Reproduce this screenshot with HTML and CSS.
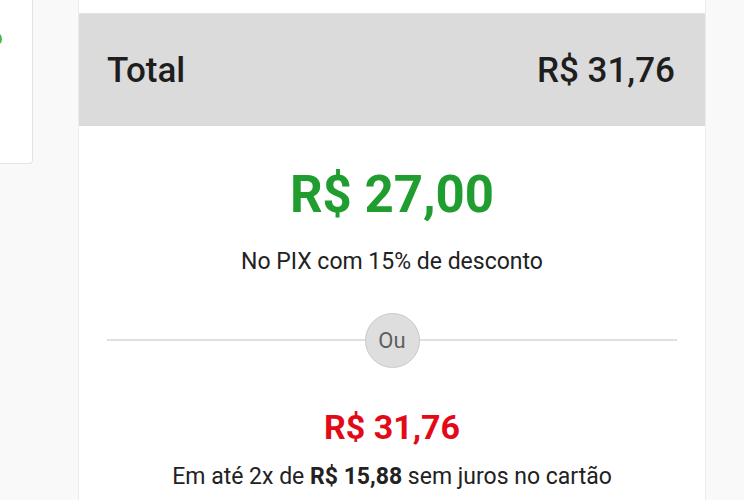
FILE: index.html
```html
<!DOCTYPE html>
<html lang="pt-BR">

<head>
    <meta charset="UTF-8">
    <meta name="viewport" content="width=device-width, initial-scale=1.0">
    <title>Resumo do pedido</title>
    <link rel="stylesheet" href="styles.css">
</head>

<body>
    <div class="page">
        <aside class="side-card">
            <span class="status-dot"></span>
        </aside>

        <section class="summary">
            <div class="summary-total">
                <span>Total</span>
                <span>R$ 31,76</span>
            </div>

            <div class="summary-body">
                <p class="price-pix">R$ 27,00</p>
                <p class="price-note">No PIX com 15% de desconto</p>

                <div class="divider">
                    <span class="divider-label">Ou</span>
                </div>

                <p class="price-card">R$ 31,76</p>
                <p class="price-note">Em até 2x de <strong>R$ 15,88</strong> sem juros no cartão</p>
            </div>
        </section>
    </div>
</body>
</html>
```

FILE: styles.css
```css
* {
    padding: 0;
    margin: 0;
    box-sizing: border-box;
}
body {
    font-family: Roboto, "Liberation Sans", sans-serif;
    background: #f9f9f9;
    color: #222;
    height: 500px;
    overflow: hidden;
}
.page {
    display: flex;
    align-items: flex-start;
    gap: 45px;
}
.side-card {
    width: 33px;
    height: 164px;
    background: #fff;
    border-right: 1px solid #e4e4e4;
    border-bottom: 1px solid #e4e4e4;
    border-bottom-right-radius: 4px;
    padding-top: 32px;
}
.status-dot {
    display: block;
    width: 14px;
    height: 14px;
    margin-left: -12px;
    border-radius: 50%;
    background: #3dbb4a;
}
.summary {
    width: 628px;
    min-height: 500px;
    background: #fff;
    border-left: 1px solid #ececec;
    border-right: 1px solid #ececec;
    padding-top: 13px;
}
.summary-total {
    display: flex;
    justify-content: space-between;
    align-items: center;
    height: 113px;
    padding: 0 30px 0 28px;
    background: #dbdbdb;
    border-top: 1px solid #e2e2e2;
    font-size: 35px;
    font-weight: 500;
    color: #1e1e1e;
}
.summary-body {
    padding: 39px 28px 0 28px;
    text-align: center;
}
.price-pix {
    font-size: 51px;
    line-height: 60px;
    font-weight: 700;
    color: #1f9d2e;
}
.price-note {
    font-size: 23px;
    line-height: 27px;
    color: #222;
}
.price-pix + .price-note {
    margin-top: 23px;
}
.divider {
    position: relative;
    display: flex;
    justify-content: center;
    margin: 38px 0 39px 0;
}
.divider::before {
    content: "";
    position: absolute;
    left: 0;
    right: 0;
    top: 26px;
    border-top: 2px solid #e0e0e0;
}
.divider-label {
    position: relative;
    width: 55px;
    height: 55px;
    border-radius: 50%;
    border: 1px solid #c9c9c9;
    background: #dedede;
    color: #5e5e5e;
    font-size: 22px;
    line-height: 53px;
}
.price-card {
    font-size: 34px;
    line-height: 40px;
    font-weight: 700;
    color: #e30a17;
    margin-bottom: 16px;
}
.price-note strong {
    font-weight: 700;
}
```
